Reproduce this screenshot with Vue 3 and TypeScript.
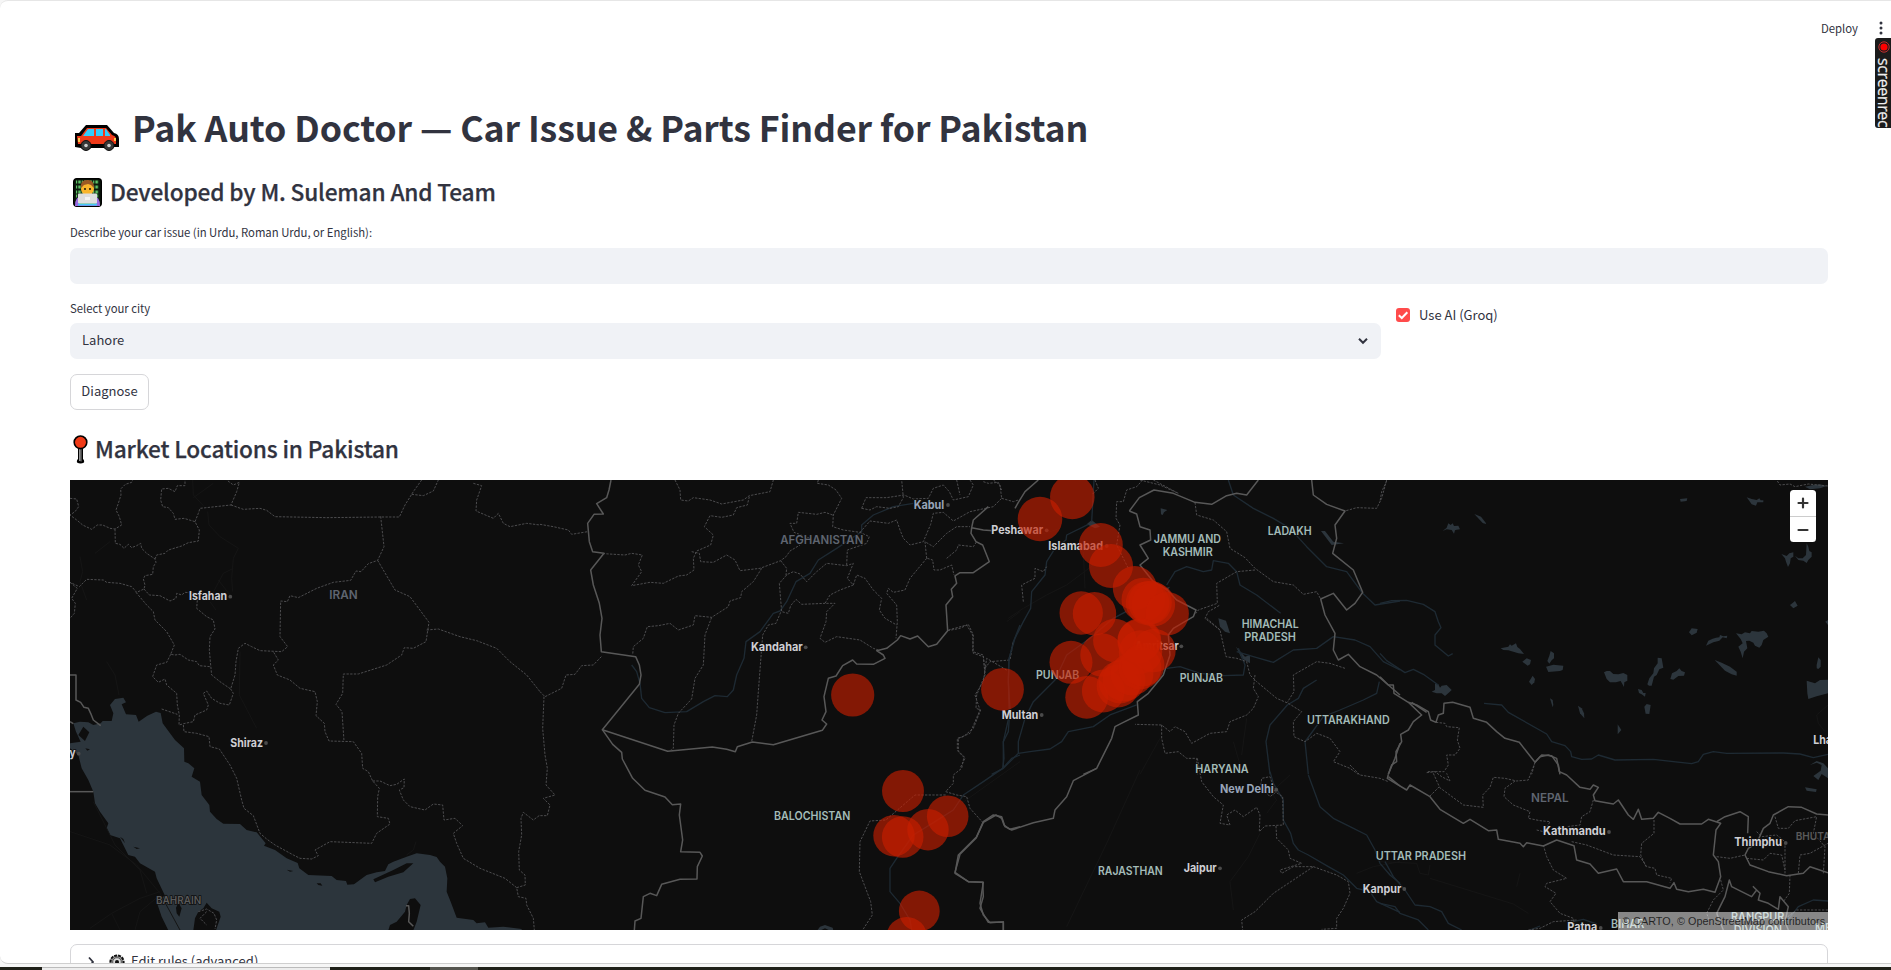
<script setup lang="ts">
interface Sheet { x: number; y: number; borders: string[]; regions: string[]; rivers: string[]; roads: string[]; lakes: string[] }
interface Label { t: string; x: number; e: number; y: number; k: string; d?: [number, number] }

// Map geometry, split in sheets; every sheet has its own origin and a 3:1 scale.
const sheets: Sheet[] = [
  {
    x: 60, y: 475,
    borders: [
      'M30 600H48V675L62 682 72 697 85 700 92 715 100 735 122 752', 'M30 950H100', 'M30 740L40 746',
      'M1038 1292L1046 1292 1048 1315 1046 1340 1060 1354',
    ],
    regions: [
      'M30 70L50 72 56 95 45 110 30 120 50 135 68 150 95 163 112 150 128 150 150 160 165 162 185 150 178 125 168 105 175 85 183 60 182 42 196 28 215 22 218 15',
      'M165 162L166 205 180 208 192 220 205 208 215 218 230 212 242 205 245 220 260 235 285 252 288 262 280 275 278 298 255 302 250 312 255 330 252 342 230 352 215 335 180 325 140 322 130 315 80 313 58 335 30 322',
      'M285 252L290 240 315 235 325 225 365 213 385 203 415 198 418 165 405 140 372 130 345 133 340 115 325 98 308 95 302 75 305 42 325 40 345 50 352 32 375 32 375 15',
      'M405 140L415 115 420 100 513 90 530 50 538 22 520 30 500 15', 'M513 90L550 103 600 100 620 106 645 125 800 128 962 126 1018 126 1035 90 1060 50 1085 15',
      'M1055 58L1090 62 1120 48 1135 15', 'M962 124L972 215 953 256 925 266 903 290 888 288 872 316 820 322 770 340 715 368 690 362 682 380 662 378 660 485 683 515 665 530 600 527 575 515 555 505 535 520 528 560 525 600 512 642 480 620 455 600 452 570 448 525 450 485 465 462 460 435 440 425 410 400 412 375',
      'M953 256L1005 345 1050 365 1107 442 1098 500 1060 520 1033 518 1025 540 980 570 895 597 850 597 848 655 828 688 846 710 852 798',
      'M1100 465L1135 462 1200 485 1250 497 1310 520 1350 560 1400 600 1440 650',
      'M252 342L268 360 300 362 330 378 348 370 350 355 365 360 375 352 410 355', 'M228 352L260 390 280 410 285 435 320 470 343 510 332 538 345 540 360 538 385 555 410 560 418 572 450 575',
      'M332 538L320 562 290 570 278 605 295 622 315 612 320 630 350 655 352 690 358 720 357 750 375 745 400 740 405 720 440 705 445 690 430 655 440 648 455 670 480 685 508 690 520 655 512 642',
      'M305 702L352 718', 'M370 750L372 770 410 775 447 785 450 815 478 822 510 870 530 910 545 975 552 1000 580 1022 600 1075 620 1092 645 1110 700 1140 720 1150 755 1152 775 1142 765 1125 810 1100 935 1105 950 1075 990 1047 985 1030 952 1025 953 965 958 940 938 918 925 890 908 880 905 835 880 800 807 798 795 770 793 745 768 722 772 680 765 650 720 640 690 615 652 600 640 570 655 555 640 530',
      'M938 918L960 918 990 932 1010 928 1033 912 1032 938 1018 945 1030 975 1050 995 1095 1005 1120 987 1148 990 1152 1035 1185 1030 1208 1052 1180 1075 1190 1105 1210 1150 1260 1180 1335 1210 1370 1238 1375 1265 1398 1270 1400 1290 1420 1330 1423 1365',
      'M1370 1238L1396 1230 1395 1200 1378 1185 1376 1130 1385 1080 1383 1030 1390 1012 1420 1035 1440 1020',
      'M1240 25L1265 32 1250 75 1248 108 1300 130 1315 115 1330 145 1350 155 1400 145 1440 150', 'M30 322L52 340 35 370 46 385 43 415 30 430',
      'M415 1310L440 1302 462 1315 470 1335 465 1362 M440 1310L420 1330 440 1350',
    ],
    rivers: [],
    roads: ['M443 110L447 150 480 185 535 220 520 250 515 310 518 350', 'M398 15L400 60 430 92 M400 68L460 25', 'M450 370L490 295 520 280 M475 315L510 360 M450 380L468 405', 'M140 560L165 600 177 660', 'M540 530L538 660 590 760', 'M30 1070L150 1110 230 1170 300 1255 360 1365', 'M90 1360L155 1315 240 1270 300 1250', 'M100 980L135 1050 165 1110 240 1185 260 1255', 'M155 1315L180 1365 M225 1365L240 1310 300 1260', 'M150 200L105 235 M60 245L68 290 60 320 80 375', 'M1068 1100L1060 1125 1040 1140'],
    lakes: [],
  },
  {
    x: 540, y: 475,
    borders: [
      'M213 15L207 45 200 68 170 86 190 117 162 118 143 145 148 200 158 230 192 235 152 285 160 330 178 385 186 430 180 480 184 530 287 545 298 570 303 600 298 628 187 764 383 829 517 816 560 823 586 830 592 815 637 801 700 809 847 766 860 747 846 735 858 710 852 665 865 610 888 603 908 572 938 555 950 567 1000 568 1035 550 1030 540 1010 527 1040 520 1072 495 1082 482 1110 492 1133 483 1165 515 1190 508 1223 467 1218 390 1238 365 1234 343 1250 325 1245 303 1260 293 1300 293 1348 260 1328 210 1308 200 1293 175 1295 158 1330 165 1360 167',
      'M187 764L218 808 245 832 247 852 278 910 315 946 375 966 397 989 422 987 418 1020 428 1095 422 1130 480 1132 487 1143 472 1175 471 1212 420 1213 365 1228 350 1262 330 1255 310 1265 303 1330 285 1338 283 1366',
      'M1440 1055L1410 1063 1392 1050 1385 1030 1368 1020 1330 1042 1308 1090 1260 1138 1245 1192 1285 1220 1328 1222 1330 1265 1320 1300 1345 1342 1390 1342 1390 1366', 'M1295 158L1300 135 1345 95',
    ],
    regions: [
      'M0 148L40 155 85 165 95 178 143 170', 'M405 15L420 45 422 75 445 78 460 68 510 75 545 87 610 75 628 62 690 50 700 15', 'M628 65L622 90 590 98 580 120 545 127 510 122 493 155 520 180 512 210 470 228 460 250 462 285 440 300 415 303 370 325 330 322 275 332 305 290 295 270 307 240 275 235 255 240 192 236',
      'M455 230L478 235 482 260 520 262 560 240 585 255 600 287 660 280 722 257 738 245 750 228 780 210', 'M665 280L640 320 605 350 602 368 570 378 565 395 515 427 465 422 460 450 415 465 390 445 355 452 322 455 310 490 280 515 278 540',
      'M515 427L495 480 490 570 465 610 455 672 415 715 402 750 400 820 392 825', 'M722 257L740 280 738 300 760 290 780 297 800 320 830 290 860 265 920 272 940 265 922 310 940 330 900 345 870 360 855 385 885 385 860 410 858 440 840 490 855 502 890 485 960 495 1000 520 1015 525',
      'M740 300L718 325 725 410 745 415 752 392 768 373 785 388 855 385', 'M722 412L708 445 685 450 668 480 655 650 650 720 635 800', 'M940 330L950 300 975 310 1000 345 1025 370 1018 405 1035 430 1070 450',
      'M832 25L865 30 888 45 905 70 880 120 878 155 910 165 960 172 988 185 980 205 922 225 920 270', 'M878 120L855 112 830 118 775 112 770 145 750 145 762 172 810 190', 'M835 15L832 25 M965 100L990 105 1010 95 1050 100 1075 95 1090 68 1085 15 M965 100L978 68 1040 68 1092 60 1120 72 1165 70 1180 40 1210 30 1228 50 1240 75 1285 65 1300 30 1290 15',
      'M960 172L990 138 1045 145 1070 135 1080 165 1090 190 1110 210 1150 200 1172 148 1180 115 1210 112 1240 138 1290 110 1360 95 1385 70 1380 30 1360 15', 'M1160 250L1110 310 1095 345 1060 352 1045 340 1040 355 1070 390 1072 440 1068 490', 'M1160 250L1155 200 1180 215 1220 175 1250 155 1290 155', 'M1162 250L1178 255 1182 285 1200 285 1235 270 1242 300 M1220 250L1250 225 1255 210 1300 215 1310 200', 'M1385 70L1420 80 1435 75',
      'M1223 467L1260 460 1285 448 1300 480 1298 530 1330 540 1335 600 1310 660 1308 700 1322 705 1300 760 1270 785 1252 790 1252 825 1272 845 1265 880 1240 900 1240 925 1217 950 1250 960 1280 965 1290 1000 1328 1042', 'M1217 960L1125 960 1055 1020 1038 1035 990 1038 960 1100 958 1190 992 1280 997 1320 968 1365', 'M1335 580L1350 560 1410 555 1420 500',
      'M184 545L160 570 125 572 105 598 78 600 65 640 15 665 0 650', 'M12 665L8 760 15 840 22 880 18 930 45 960 10 970 30 990 22 1022 0 1022', 'M1250 15L1260 60 M1330 20L1345 25 1375 22 1385 45',
    ],
    rivers: ['M1120 85L1060 95 1000 120 965 150 965 170 890 220 835 255 810 295 768 320 740 380 720 408 700 415 660 470 618 500 612 550 590 600 580 645 562 665 525 662 490 680 440 710 375 713 328 698 305 670 300 625 290 590 275 570', 'M1440 450L1420 500 1407 555 1405 620 1410 700 1405 770 1390 800 1392 850 1388 880', 'M1440 840L1415 850 1388 880 1330 920 1270 960 1240 1005 1185 1040 1120 1080 1070 1150 1050 1180 1050 1250 1080 1285 1110 1335 1115 1366'],
    roads: ['M1265 985L1440 860', 'M1400 440L1440 410'],
    lakes: ['M832 1366L840 1355 855 1350 878 1358 880 1366 868 1366 855 1360 842 1366Z'],
  },
  {
    x: 940, y: 475,
    borders: [
      'M295 15L255 50 235 82 225 100', 'M568 108L598 68 642 45 700 55 765 82 815 88 860 62 890 55 920 60 955 15', 'M568 108L590 117 600 155 630 165 632 195 600 210 625 250 600 270 640 320 682 345 710 375 768 405 760 425 700 460 685 480 690 540 670 600 625 655 592 680 595 720 550 742 525 755 515 790 470 880 430 898',
      'M1115 15L1120 60 1160 88 1215 108 1185 150 1190 190 1178 235 1240 285 1268 352 1245 385 1220 405 1180 355 1142 372 1155 420 1185 475 1180 525 1195 555 1225 538 1260 575 1310 600 1380 660', 'M1380 805L1365 850 1345 898',
    ],
    regions: [
      'M608 15L590 35 560 45 550 80 530 80 528 130 540 150 530 210 545 240 565 280 M465 15L475 40 455 60', 'M765 82L770 120 820 135 860 170 870 220 915 248 945 280 1000 320 1060 330 1090 358 1130 350 1142 372', 'M600 15L660 30 715 55 M640 15L715 55',
      'M945 285L890 290 830 325 832 385 775 405 768 415 M800 430L840 465 858 545 890 550 920 560 930 600 950 620 1010 670 1045 685', 'M945 600L940 640 955 665 940 700 920 720 870 740 860 770 810 775 755 805 735 770 705 755 690 770 665 750 585 748', 'M665 750L665 790 675 835 715 830 740 850 770 850 772 898',
      'M1045 685L1085 710 1060 740 1062 785 1095 800 1130 775 1170 790 1200 830 1180 860 1230 880 1255 898', 'M1215 580L1170 565 1130 560 1060 600 1062 650 1042 682', 'M1340 15L1325 70 1310 100 1250 98 1215 108', 'M200 585L140 550 130 620 105 660 120 705 90 775 55 790 55 830 75 850 60 880', 'M250 380L245 330 285 310 285 280 310 290 320 275', 'M25 465L80 450 98 480 100 535 130 545 135 595', 'M840 465L795 430 805 410 840 390',
    ],
    rivers: ['M462 15L455 140 M445 148L380 180 378 195 345 220 320 260 315 300 275 350 272 400 250 440 225 490 207 550 205 620 208 720 190 800 190 880 155 898', 'M865 15L880 60 940 100 1000 130 1050 160 1100 215 1160 275 1220 290 1268 355 1305 390 1380 378', 'M680 330L705 290 740 275 790 290 815 285 820 257 865 265 890 290 900 330 950 360 1022 415', 'M590 690L510 720 460 755 385 770 365 800 330 822 270 830 235 835 190 880', 'M558 410L520 430 450 490 380 540 345 615 280 680 255 730 235 800 235 835', 'M1380 585L1330 560 1290 515 1245 495 1180 485 1130 520 1060 525 1000 562 940 545 890 530', 'M680 580L720 575 780 595 850 602 910 600 915 570 895 520', 'M1318 620L1310 655 1270 675 1200 705 1150 725 1110 780 1095 800 1105 898', 'M1130 615L1090 640 1075 670 1042 690 990 750 978 800 990 898'],
    roads: ['M360 160L300 180 M430 230L435 340 M460 270L380 330 320 360 250 400 205 430', 'M660 790L600 898 M920 730L905 840 M880 800L900 870'],
    lakes: ['M662 100L682 105 672 112 668 120 663 118Z', 'M440 148L455 135 480 155 465 160Z', 'M835 430L858 437 870 475 855 470 840 455Z', 'M888 515L915 545 930 540 930 565 905 550Z', 'M1143 168L1155 168 1180 200 1212 205 1175 210Z', 'M675 340L690 335 680 350Z'],
  },
  {
    x: 1380, y: 475,
    borders: [
      'M0 605L25 630 40 630 42 655 85 682 110 690 145 710 152 735 168 742 175 720 190 715 192 685 218 682 270 697 280 730 320 742 350 770 375 790 418 802 465 862 485 840 515 842 535 870 540 898', 'M85 682L125 720 100 740 85 765 62 778 65 800 48 830 50 860 35 870 25 898', 'M95 682L140 712',
    ],
    regions: ['M20 18L5 50 0 80', 'M168 742L195 745 200 755 238 758 232 795 240 820 225 840 200 840 205 870 192 890 140 890', 'M465 862L455 898', 'M1192 18L1200 30 1230 27 1245 35 1285 27 1344 33'],
    rivers: ['M0 385L35 377 80 376 130 388 165 410 175 440 183 458 165 480 165 510 205 543 218 536', 'M0 535L20 557 75 593 100 583 130 598 175 630', 'M312 685L365 690 385 712 500 777 515 800 555 812 572 830 575 845 605 853 635 852 655 840 705 855 820 853 935 866 955 860 970 838 1000 830 1040 835 1210 834 1260 837 1300 848 1344 838'],
    roads: ['M1344 690L1310 720 1315 745 1335 770'],
    lakes: [
      'M188 168L200 158 205 145 212 150 218 145 222 153 235 152 240 163 230 164 225 166 222 176 215 165 200 163Z', 'M283 117L303 125 320 147 308 144Z', 'M900 72L922 70 920 78 902 80Z', 'M1100 67L1115 72 1130 75 1138 70 1142 76 1150 76 1150 82 1132 82 1128 92 1115 88Z', 'M1204 237L1220 243 1228 235 1240 232 1240 245 1232 250 1230 265 1224 276 1218 260 1215 250Z', 'M1245 242L1255 250 1268 250 1278 240 1280 205 1285 215 1288 228 1295 232 1295 245 1285 255 1280 264 1270 257 1255 255Z', 'M1230 390L1237 385 1245 378 1253 392 1240 400Z', 'M362 520L385 515 390 508 395 512 408 505 412 516 420 522 432 537 415 535 400 530 385 526 370 525Z', 'M427 560L440 550 453 555 450 568 443 572Z', 'M502 558L508 542 512 528 522 535 522 550 515 556 508 566Z', 'M498 575L520 569 550 572 548 585 540 588 505 591Z', 'M447 620L458 602 465 612 463 622 455 630Z', 'M510 670L518 675 520 690 518 697Z', 'M594 692L605 700 612 715 613 730 600 715Z', 'M672 592L680 588 690 588 700 597 715 598 730 594 742 600 742 617 733 622 732 636 722 618 708 622 690 622 680 612Z', 'M713 748L724 765 713 778Z', 'M774 642L785 645 790 654 797 654 795 665 785 658 777 654Z', 'M793 695L800 687 812 690 808 717 797 716Z', 'M802 628L808 610 820 595 822 580 833 565 833 548 845 550 850 578 838 583 830 600 822 605 815 632 807 632Z', 'M871 612L876 595 890 588 898 580 905 588 915 592 912 602 895 603 880 614Z', 'M927 472L935 460 953 462 950 473 935 481Z', 'M978 512L985 497 998 491 1008 488 1018 487 1020 480 1030 484 1042 482 1040 490 1028 487 1018 497 1000 502Z', 'M1004 555L1025 563 1050 575 1070 590 1070 602 1055 598 1035 587Z', 'M1068 475L1085 478 1095 472 1110 475 1115 468 1135 470 1152 467 1160 475 1165 485 1150 495 1145 510 1138 518 1125 512 1120 503 1108 497 1098 498 1102 520 1092 530 1088 550 1082 530 1075 515 1088 505 1082 492Z', 'M1280 617L1290 620 1305 625 1320 615 1344 614V655L1310 664 1285 672 1282 655Z', 'M1310 570L1315 547 1322 555 1322 575 1315 582 1310 580Z', 'M155 650L165 645 165 625 175 628 180 638 185 632 200 630 215 645 208 652 195 663 185 655 170 655Z',
      'M1275 35L1300 30 1320 28 1340 33 1320 40 1290 43Z', 'M1336 440L1344 435V450Z',
    ],
  },
  {
    x: 940, y: 700, borders: ['M470 205L400 242 380 290 345 330 340 355 280 368 215 390 195 380 185 350 160 345 130 365 110 410 55 465 45 520 85 545 130 547 120 610 130 645 150 668 190 665V690', 'M1345 230L1380 258'],
    regions: ['M772 175L785 245 820 290 850 315 840 370 870 375 860 345 885 330 910 350 950 322 960 345 958 395 975 378 1030 375 1028 290 1005 275 990 230 965 235 962 260 990 290 1010 275', 'M1008 378L1010 415 1045 450 1050 475 1085 490 1020 510 1025 520 1060 500 1120 500 1060 540 1000 580 945 635 905 660 908 690', 'M1120 500L1190 525 1225 545 1230 580 1210 625 1190 655 1190 685 1145 688', 'M1230 195L1260 225 1320 235 1345 245'],
    rivers: ['M990 215L1000 250 1030 300 1030 360 1052 400 1060 430 1075 450 1105 465 1165 500 1210 525 1250 565 1290 575 1310 605 1380 637', 'M1105 225L1140 320 1180 355 1230 380 1280 405 1305 450 1320 490 1350 525 1380 550'],
    roads: ['M600 210L500 430 380 680', 'M960 400L925 470 870 545 880 630', 'M990 280L1050 225 M980 340L1010 300 980 260', 'M1380 485L1300 500 1250 520'],
    lakes: [],
  },
  {
    x: 1380, y: 700,
    borders: [
      'M25 223L22 235 80 270 90 255 150 290 180 328 250 370 270 358 325 392 350 390 355 418 420 430 430 440 440 428 490 438 530 420 582 437 590 480 630 492 655 520 710 507 730 545 800 545 870 565 882 548 890 568 925 575 970 568 1005 577 1022 530 1015 485 1000 465 1008 390 1022 370 985 358 965 372 900 372 870 355 835 337 820 355 785 358 775 328 760 358 745 345 715 300 700 312 645 302 640 285 655 262 640 255 630 268 600 262 560 225 538 215 530 175 505 165 480 170 465 187',
      'M1010 365L1035 350 1080 335 1105 350 1103 400 M1344 345L1310 342 1265 322 1225 320 1180 345 1170 370 1150 385 1130 430 1105 445 1095 465 1110 495 1165 515 1220 527 1270 520 1290 500 1344 518', 'M1010 640L1035 590 1048 540 1055 560 1085 575 1115 590 1130 570 1120 560 1140 580 1135 600 1165 610 1195 628 1200 590 1225 620 1215 665 1225 690', 'M1010 640L1030 690',
    ],
    regions: [
      'M140 218L165 215 185 230 210 243 200 220 M160 220L178 260 150 288 M178 262L250 315 310 322 308 285 330 262 340 232 375 235 410 243 445 240 465 187', 'M405 243L375 265 372 290 400 315 450 335 445 355 480 362 510 365 490 400 M470 390L490 395', 'M490 435L500 470 520 510 560 535 500 550 495 560 528 580 510 605 540 640 580 655 585 690', 'M575 425L620 435 700 465 780 470 800 500 825 505 830 525 875 535 870 548', 'M640 300L630 335 605 350 600 375 560 380', 'M822 360L822 400 785 430 782 465 798 500', 'M1010 470L1050 475 1095 465', 'M1022 540L1030 570 1000 600 980 640 990 665', 'M1185 350L1195 385 1225 385 1245 362 1310 350 1300 400 1335 440 1330 520 M1130 395L1145 410 1190 405 1215 425 1215 520 M1100 475L1150 480 1170 460 1205 465 1215 510 M1255 520L1260 465 1290 460 1344 430', 'M1230 525L1228 580 1210 605', 'M1344 630L1250 630 1210 660', 'M445 690L480 685 520 665 590 660',
    ],
    rivers: ['M15 485L40 530 75 570 105 615 150 620 185 635 205 670 245 690', 'M0 610L45 620 60 640 115 660 145 690', 'M580 665L610 658 650 672', 'M1220 665L1255 620 1300 600 1344 603', 'M450 690L480 678'],
    roads: ['M0 485L110 490 120 520 145 525 150 495 M150 535L280 575 400 612 445 640', 'M410 560L420 520'],
    lakes: ['M1275 262L1310 268 1308 276 1280 272Z', 'M1290 195L1310 183 1330 190 1344 205V235L1325 222 1315 240 1300 228 1322 212 1325 195 1310 188Z'],
  },
]

const labels: Label[] = [
  { t: 'Isfahan', x: 189, e: 227, y: 600, k: 'city', d: [230.3, 596.7] },
  { t: 'IRAN', x: 329.3, e: 357.7, y: 599.3, k: 'country' },
  { t: 'Shiraz', x: 230.3, e: 263, y: 746.7, k: 'city', d: [266, 743] },
  { t: 'y', x: 69.5, e: 75.5, y: 757, k: 'city', d: [78.7, 753.7] },
  { t: 'BAHRAIN', x: 156, e: 201.3, y: 904, k: 'faint' },
  { t: 'AFGHANISTAN', x: 780.3, e: 863.3, y: 544.3, k: 'country' },
  { t: 'Kabul', x: 913.7, e: 944.3, y: 508.7, k: 'capital', d: [948, 505] },
  { t: 'Kandahar', x: 751, e: 802.7, y: 651, k: 'city', d: [805.7, 647.3] },
  { t: 'BALOCHISTAN', x: 774, e: 850.3, y: 820, k: 'state' },
  { t: 'Peshawar', x: 991.3, e: 1043, y: 534, k: 'city', d: [1046.7, 530.3] },
  { t: 'Islamabad', x: 1048.3, e: 1103, y: 550, k: 'city', d: [1106.7, 546] },
  { t: 'Amritsar', x: 1135, e: 1178.7, y: 650, k: 'city', d: [1181.3, 646.3] },
  { t: 'JAMMU AND', x: 1153.7, e: 1221, y: 543, k: 'state' },
  { t: 'KASHMIR', x: 1162.7, e: 1212.7, y: 556, k: 'state' },
  { t: 'LADAKH', x: 1267.7, e: 1311.7, y: 535.3, k: 'state' },
  { t: 'HIMACHAL', x: 1241.7, e: 1298.7, y: 627.7, k: 'state' },
  { t: 'PRADESH', x: 1244.3, e: 1296, y: 640.7, k: 'state' },
  { t: 'PUNJAB', x: 1036, e: 1079.3, y: 678.7, k: 'state' },
  { t: 'PUNJAB', x: 1179.7, e: 1223, y: 682, k: 'state' },
  { t: 'Multan', x: 1001.7, e: 1038.3, y: 719, k: 'city', d: [1041.7, 715] },
  { t: 'UTTARAKHAND', x: 1307, e: 1389.7, y: 724.3, k: 'state' },
  { t: 'HARYANA', x: 1195.3, e: 1248.7, y: 773.3, k: 'state' },
  { t: 'New Delhi', x: 1220, e: 1273.7, y: 793.3, k: 'capital', d: [1276.3, 789.7] },
  { t: 'RAJASTHAN', x: 1098, e: 1162.7, y: 875, k: 'state' },
  { t: 'Jaipur', x: 1183.7, e: 1216.7, y: 872, k: 'city', d: [1220, 868.3] },
  { t: 'UTTAR PRADESH', x: 1375.7, e: 1466, y: 860, k: 'state' },
  { t: 'Kanpur', x: 1362.7, e: 1401.3, y: 892.7, k: 'city', d: [1404.3, 889] },
  { t: 'NEPAL', x: 1531, e: 1568.7, y: 802.3, k: 'country' },
  { t: 'Kathmandu', x: 1543, e: 1605.7, y: 835.3, k: 'city', d: [1609, 832] },
  { t: 'Thimphu', x: 1734.3, e: 1782, y: 846, k: 'city', d: [1785.7, 843] },
  { t: 'BHUTAN', x: 1795.7, e: 1838, y: 840.3, k: 'faint' },
  { t: 'Lhasa', x: 1813.3, e: 1844, y: 744.3, k: 'city' },
  { t: 'Patna', x: 1567.3, e: 1597.3, y: 931, k: 'city', d: [1600.7, 928] },
  { t: 'BIHAR', x: 1611, e: 1644.3, y: 928, k: 'state' },
  { t: 'RANGPUR', x: 1731, e: 1784.3, y: 921.3, k: 'state' },
  { t: 'DIVISION', x: 1733.7, e: 1782, y: 934, k: 'state' },
  { t: 'MEGHALAYA', x: 1815, e: 1884, y: 932, k: 'state' },
]

const markets: [number, number, number][] = [
  [852.7, 695, 21.6], [1002.5, 689.3, 21.4], [903, 791, 21], [947.7, 816.3, 20.8], [928, 829.7, 20.7], [894, 835.7, 20.7], [902.7, 837, 20.8],
  [919.3, 911, 20.4], [906.7, 937.3, 20.4], [1072.3, 497, 22.3], [1040, 519, 22.3], [1100.8, 545, 22], [1111, 566, 22], [1134.8, 588, 22],
  [1143.3, 599.5, 21.8], [1147.5, 603, 21.8], [1150, 602.5, 21.8], [1153.3, 604.5, 21.8], [1167.2, 613.7, 21.7], [1081.2, 613, 21.7], [1094.5, 613.7, 21.7],
  [1114.8, 640.5, 21.7], [1102, 655, 21.7], [1071, 662.3, 21.5], [1139.5, 640, 21.7], [1139, 641, 21.7], [1154, 650.5, 21.7], [1140.5, 652, 21.7], [1086.7, 697.3, 21.4],
  [1103.3, 691, 21.4], [1118, 686, 21.4], [1120, 682, 21.4], [1124, 680, 21.4], [1132, 674, 21.4], [1140, 668, 21.4], [1143, 665, 21.4],
]
</script>

<template>
  <div class="screen">
    <main class="page">
      <header class="toolbar">
        <span class="deploy">Deploy</span>
        <svg class="dots" width="6" height="14" viewBox="0 0 6 14"><circle cx="3" cy="2" r="1.5" /><circle cx="3" cy="7" r="1.5" /><circle cx="3" cy="12" r="1.5" /></svg>
      </header>

      <section class="content">
        <h1>
          <svg class="car" width="46" height="28" viewBox="0 0 46 28">
            <path d="M1 9H5L12 1H33L40 9Q45 10 45 15V23H40A6 5 0 0 1 30 24H17A6 5 0 0 1 7 24L1 23Z" fill="#000" />
            <path d="M3 12H7L13 4H32L38 11Q42 12 42 15V20H4Z" fill="#ef3a19" />
            <path d="M9 12L14 5H20V12ZM22 5H29V12H22ZM31 5H32L36 11V12H31Z" fill="#31cdfb" />
            <path d="M4 14H6V18H4ZM40 14H42V17H40Z" fill="#f9c74b" />
            <circle cx="12" cy="21.5" r="5" fill="#383838" stroke="#111" /><circle cx="12" cy="21.5" r="1.8" fill="#ccc" />
            <circle cx="35" cy="21.5" r="5" fill="#383838" stroke="#111" /><circle cx="35" cy="21.5" r="1.8" fill="#ccc" />
          </svg>
          <span class="h1-text">Pak Auto Doctor — Car Issue &amp; Parts Finder for Pakistan</span>
        </h1>
        <h3 class="dev">
          <svg class="coder" width="29" height="29" viewBox="0 0 29 29">
            <rect x=".7" y=".7" width="27.6" height="27.6" rx="3" fill="#0c1a0d" stroke="#000" stroke-width="1.4" />
            <path d="M3 4H26M3 9H26M3 14H26M3 18H26" stroke="#5fc267" stroke-width="3" stroke-dasharray="1.2 1.1 2.4 1" />
            <path d="M2 28Q2 18 9 18H20Q27 18 27 28Z" fill="#9b6be0" />
            <path d="M6 27Q6 20 11 19H18Q23 20 23 27Z" fill="#f9c21b" />
            <circle cx="14.5" cy="11" r="6.5" fill="#f9b52b" />
            <path d="M8 10Q7 2 14 2Q21 1 21 10L18 7L15 6L11 7Z" fill="#9a5a25" />
            <circle cx="12" cy="11" r=".9" /><circle cx="17" cy="11" r=".9" />
            <rect x="5" y="15.5" width="19" height="10" rx="1" fill="#dedede" /><path d="M12 19H17V22H12Z" fill="#f4f4f4" />
            <rect x="5" y="25.5" width="19" height="2" fill="#45c8f5" />
          </svg>
          <span class="dev-text">Developed by M. Suleman And Team</span>
        </h3>

        <label class="lbl issue">Describe your car issue (in Urdu, Roman Urdu, or English):</label>
        <div class="field"></div>

        <div class="cols">
          <div class="city-col">
            <label class="lbl">Select your city</label>
            <div class="field select">
              <span class="lahore">Lahore</span>
              <svg width="12" height="8" viewBox="0 0 12 8"><path d="M2 1.8L6 5.8L10 1.8" fill="none" stroke="#31333f" stroke-width="2" /></svg>
            </div>
          </div>
          <div class="check">
            <svg width="14" height="14" viewBox="0 0 14 14"><rect width="14" height="14" rx="3" fill="#ff4b4b" /><path d="M2.8 7.2L5.8 10L11.3 4.2" fill="none" stroke="#fff" stroke-width="2" /></svg>
            <span>Use AI (Groq)</span>
          </div>
        </div>

        <button class="diagnose">Diagnose</button>

        <h3 class="market">
          <svg class="pin" width="15" height="29" viewBox="0 0 15 29">
            <path d="M5 12V24Q3.5 25 4 27.5Q7.5 29.5 11 27.5Q11.5 25 10 24V12Z" fill="#000" />
            <path d="M6.3 13V26H7.5V13Z" fill="#d8d8d8" /><path d="M7.5 13V26.5H8.7V13Z" fill="#666" />
            <circle cx="7.5" cy="7.3" r="6.3" fill="#f03a17" stroke="#000" stroke-width="1.6" />
          </svg>
          <span class="market-text">Market Locations in Pakistan</span>
        </h3>

        <div class="map">
          <svg class="canvas" width="1758" height="450" viewBox="70 480 1758 450">
            <g transform="translate(60 475) scale(.33333)">
              <path class="lake" d="M150 690L165 672 190 668 198 682 185 688 198 718 228 720 236 740 262 722 288 710 302 714 308 745 330 775 345 795 372 820 373 860 385 865 403 880 395 905 420 920 425 960 448 990 450 1010 470 1032 490 1046 540 1047 560 1065 590 1072 617 1105 612 1112 645 1125 680 1150 713 1164 718 1180 745 1200 815 1203 830 1215 858 1218 862 1229 882 1228 920 1200 950 1192 975 1188 985 1168 1000 1160 1040 1145 1070 1135 1110 1140 1130 1146 1140 1160 1155 1175 1162 1210 1160 1250 1172 1280 1190 1328 1240 1335 1250 1345 1275 1342 1285 1358 1330 1355 1385 1362V1366H1060L1070 1340 1082 1290 1065 1270 1050 1272 1040 1290 1035 1310 1010 1340 990 1350 985 1366H468L482 1325 478 1310 455 1300 440 1283 430 1300 415 1310 405 1330 400 1366H325L305 1325 288 1275 315 1262 290 1210 285 1190 240 1165 225 1145 205 1140 190 1110 180 1090 150 1080 140 1060 145 1045 120 1010 105 985 100 950 85 915 65 880 55 840 30 820 30 805 62 800 48 770 40 745 60 740 85 742 100 750 122 745 128 738 155 738 160 715Z" />
              <path class="land" d="M70 755L88 772 75 798 55 780ZM348 1298L355 1283 365 1300 358 1325 350 1315ZM940 1213L1000 1185 1040 1165 1060 1165 1030 1192 985 1205 945 1222ZM770 1225L782 1225 787 1232 775 1230ZM680 1184L700 1188 690 1190ZM195 1105L180 1085 190 1092ZM76 820L90 823 82 827ZM220 1115L240 1120 230 1122Z" />
            </g>
            <g v-for="(s, i) in sheets" :key="i" :transform="`translate(${s.x} ${s.y}) scale(.33333)`">
              <path v-for="(p, j) in s.roads" :key="'o' + j" class="road" :d="p" />
              <path v-for="(p, j) in s.lakes" :key="'l' + j" class="lake" :d="p" />
              <path v-for="(p, j) in s.rivers" :key="'r' + j" class="river" :d="p" />
              <path v-for="(p, j) in s.regions" :key="'g' + j" class="region" :d="p" />
              <path v-for="(p, j) in s.borders" :key="'b' + j" class="border" :d="p" />
            </g>
            <g v-for="(l, i) in labels" :key="'t' + i">
              <circle v-if="l.d" :cx="l.d[0]" :cy="l.d[1]" r="1.9" class="town" />
              <text :x="l.x" :y="l.y" :textLength="l.e - l.x" lengthAdjust="spacingAndGlyphs" :class="l.k">{{ l.t }}</text>
            </g>
            <circle v-for="(m, i) in markets" :key="'m' + i" class="market-dot" :cx="m[0]" :cy="m[1]" :r="m[2]" />
          </svg>
          <div class="zoom">
            <span><svg width="12" height="12" viewBox="0 0 12 12"><path d="M6 1.5V10.5M1.5 6H10.5" /></svg></span>
            <span><svg width="12" height="12" viewBox="0 0 12 12"><path d="M1.5 6H10.5" /></svg></span>
          </div>
          <div class="credit">© CARTO, © OpenStreetMap contributors</div>
        </div>

        <div class="expander">
          <svg class="arrow" width="8" height="12" viewBox="0 0 8 12"><path d="M2 1.5L6 6L2 10.5" fill="none" stroke="#31333f" stroke-width="1.8" /></svg>
          <svg class="gear" width="16" height="18" viewBox="0 0 16 18">
            <circle cx="8" cy="9" r="6.6" fill="#999" stroke="#111" stroke-width="2" stroke-dasharray="3 1" /><circle cx="8" cy="9" r="4.3" fill="#ddd" stroke="#555" /><circle cx="8" cy="9" r="2" fill="#111" />
          </svg>
          <span>Edit rules (advanced)</span>
        </div>
      </section>

      <aside class="recorder">
        <svg width="12" height="12" viewBox="0 0 12 12"><circle cx="6" cy="6" r="5.2" fill="none" stroke="#e33" stroke-width=".8" /><circle cx="6" cy="6" r="3.6" fill="#f00" /></svg>
        <span>screenrec</span>
      </aside>
    </main>
    <footer class="taskbar"><i class="tab"></i><i class="gap"></i><i class="item"></i></footer>
  </div>
</template>

<style>
html, body { margin: 0; overflow: hidden; background: #f4f4f4; }
</style>

<style scoped>
.screen { width: 1891px; height: 970px; overflow: hidden; display: flex; flex-direction: column; background: #f6f6f6; font-family: "Noto Sans CJK SC", "Noto Sans", sans-serif; color: #31333f; }
.page { position: relative; box-sizing: border-box; height: 964px; flex: none; overflow: hidden; background: #fff; border-top: 1px solid #e6e6e6; border-bottom: 1px solid #cfcfcf; border-radius: 8px 0 0 8px; }
.toolbar { height: 53px; display: flex; justify-content: flex-end; align-items: center; gap: 20px; padding-right: 7px; }
.deploy { font-size: 11.35px; line-height: 16px; }
.dots { fill: #31333f; margin-top: 1px; }
.content { margin-left: 70px; width: 1758px; display: flex; flex-direction: column; }
h1, h3 { margin: 0; display: flex; align-items: center; white-space: nowrap; }
h1 { height: 48px; margin-top: 49px; font-size: 35.7px; line-height: 48px; font-weight: 700; letter-spacing: -.12px; }
.car { margin: 21px 12px 0 4px; flex: none; align-self: flex-start; }
h3 { height: 36px; font-size: 22.7px; line-height: 36px; font-weight: 500; letter-spacing: -.17px; -webkit-text-stroke: .25px #31333f; }
.dev { margin-top: 23px; }
.coder { margin: 0 8px 0 3px; -webkit-text-stroke: 0; }
.lbl { font-size: 11.35px; line-height: 16px; height: 16px; display: block; white-space: nowrap; letter-spacing: -.03px; }
.issue { margin-top: 14px; }
.field { height: 36px; margin-top: 8px; background: #f0f2f6; border-radius: 7px; box-sizing: border-box; }
.cols { display: flex; gap: 15px; margin-top: 16px; }
.city-col { width: 1311px; }
.select { margin-top: 7px; display: flex; align-items: center; justify-content: space-between; padding: 0 12px; font-size: 13px; line-height: 18px; }
.lahore { margin-top: -2px; }
.check { display: flex; align-items: center; gap: 9px; height: 18px; margin-top: 6px; font-size: 13px; line-height: 18px; }
.diagnose { margin-top: 15px; width: 79px; height: 36px; border: 1px solid #d6d6d9; border-radius: 7px; background: #fff; font: 400 13px/18px "Noto Sans CJK SC", "Noto Sans", sans-serif; color: #31333f; padding: 0 0 3px; }
.market { margin-top: 21px; }
.pin { margin: 0 7px 0 3px; }
.map { position: relative; margin-top: 13px; width: 1758px; height: 450px; background: #0e0e0e; overflow: hidden; }
.canvas { display: block; }
.lake { fill: #2c353c; }
.land { fill: #0e0e0e; }
.river, .road, .region, .border { fill: none; stroke-linejoin: round; }
.river { stroke: #1e2a33; stroke-width: 4; }
.road { stroke: #151515; stroke-width: 3; }
.region { stroke: #4c4c4e; stroke-width: 3; stroke-dasharray: 7 4; }
.border { stroke: #585858; stroke-width: 4.5; }
.town { fill: #4a4a4a; }
text { font-family: Inter, "Noto Sans", sans-serif; font-size: 11.8px; font-weight: 700; paint-order: stroke; stroke: #0e0e0e; stroke-width: 1.6px; }
.city { fill: #cfcfd4; }
.state { fill: #a3bbb8; font-weight: 600; }
.country { fill: #5f6570; font-weight: 600; }
.capital { fill: #98a4b8; }
.faint { fill: #5a5a5a; font-weight: 600; font-size: 11px; }
.market-dot { fill: rgb(200, 30, 0); fill-opacity: .63; }
.zoom { position: absolute; top: 10px; right: 12px; width: 26px; height: 52px; border-radius: 3.5px; background: #fff; overflow: hidden; }
.zoom span { height: 26px; display: flex; align-items: center; justify-content: center; box-sizing: border-box; }
.zoom span + span { border-top: 1px solid #ccc; }
.zoom path { stroke: #333; stroke-width: 2.2; stroke-linecap: round; fill: none; }
.credit { position: absolute; right: 0; bottom: 0; width: 210px; height: 18px; box-sizing: border-box; padding-left: 4px; background: rgba(255, 255, 255, .5); font: 10.8px/18px "Liberation Sans", Arial, sans-serif; letter-spacing: .06px; color: rgba(0, 0, 0, .75); white-space: nowrap; }
.expander { margin-top: 14px; height: 36px; box-sizing: border-box; border: 1px solid #d6d6d9; border-radius: 7px; display: flex; align-items: center; font-size: 13px; line-height: 18px; padding-bottom: 3px; }
.arrow { margin: 3px 0 0 16px; }
.gear { margin: 2px 6px 0 14px; }
.recorder { position: absolute; top: 37px; right: 0; width: 16px; height: 90px; border-radius: 3px 0 0 3px; background: #1b1b1b; color: #f0f0f0; display: flex; flex-direction: column; align-items: center; box-sizing: border-box; padding: 3px 0 0 2px; gap: 5px; overflow: hidden; }
.recorder span { writing-mode: vertical-rl; font: 16px/14px "Open Sans", sans-serif; letter-spacing: -.4px; -webkit-text-stroke: .2px #f0f0f0; }
.recorder svg { flex: none; }
.taskbar { margin-top: 3px; height: 3px; display: flex; background: #1f2018; }
.tab { margin-left: 42px; width: 288px; background: #ededed; border-top: 1px solid #bbb; box-sizing: border-box; }
.gap { width: 100px; }
.item { width: 48px; background: #55554f; }
</style>
